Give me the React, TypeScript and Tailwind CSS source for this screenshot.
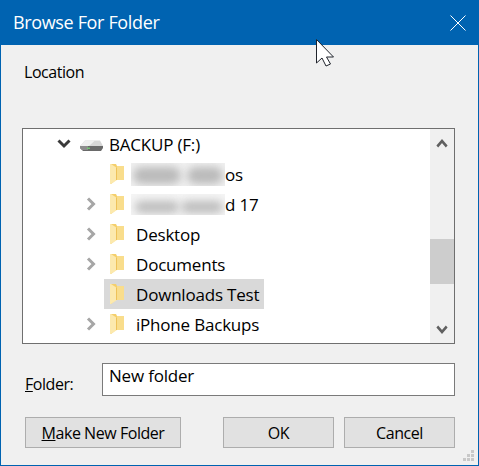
function FolderIcon() {
  return (
    <svg width="14" height="22" viewBox="0 0 14 22" className="shrink-0">
      <path d="M0 1 H6 L7 3 H14 V17 H6 L1 21 H0 Z" fill="#f4cf6c" />
      <path d="M7 3 H14 V17 H7 Z" fill="#f9dd8c" />
      <path d="M0 1 H1 L7 5 V17 L1 21 H0 Z" fill="#fce9ae" />
      <path d="M6.5 4.5 V17" stroke="#eec25a" strokeWidth="1" />
    </svg>
  );
}

function DriveIcon() {
  return (
    <svg width="23" height="12" viewBox="0 0 23 12" className="shrink-0">
      <path d="M5 0.5 H20 L23 6 H0 Z" fill="#d6d6d6" />
      <path d="M0 6 L5 0.5 H15 L9 6 Z" fill="#efefef" />
      <path d="M0 6 H23 V8 L21 11 H3 L0 8 Z" fill="#6a6a6a" />
      <path d="M0 6 H8 V10 H2 L0 8 Z" fill="#8c8c8c" />
      <path d="M7 7.5 H10 V9 H7 Z" fill="#74c474" />
    </svg>
  );
}

function ArrowRight() {
  return (
    <svg width="10" height="14" viewBox="0 0 10 14" className="shrink-0">
      <path d="M2 1.5 L7.5 7 L2 12.5" fill="none" stroke="#a6a6a6" strokeWidth="3" />
    </svg>
  );
}

function ArrowVertical({ up, color, width }: { up?: boolean; color: string; width: number }) {
  return (
    <svg width={width} height="10" viewBox="0 0 14 10" preserveAspectRatio="none" className="shrink-0">
      <path d={up ? "M1.5 8.5 L7 3 L12.5 8.5" : "M1.5 1.5 L7 7 L12.5 1.5"} fill="none" stroke={color} strokeWidth="3" />
    </svg>
  );
}

function Row({ label, arrow, selected, children }: { label: string; arrow?: boolean; selected?: boolean; children?: React.ReactNode }) {
  return (
    <div className="flex h-[30px] items-center">
      <div className="flex w-[81px] justify-end pr-[8px]">{arrow && <ArrowRight />}</div>
      <div className={`flex h-[30px] items-center pl-[6px] ${selected ? "w-[160px] bg-[#d9d9d9]" : ""}`}>
        <FolderIcon />
        {children}
        <span className={children ? "pt-[2px]" : "ml-[12px] pt-[2px]"}>{label}</span>
      </div>
    </div>
  );
}

export default function App() {
  return (
    <div className="relative flex h-[466px] w-[479px] flex-col border-x border-b border-[#0063b1] bg-[#f0f0f0] font-['Open_Sans','Noto_Sans',sans-serif] text-[16px] tracking-[-0.45px] text-black">
      {/* Title bar */}
      <div className="-mx-px flex h-[45px] shrink-0 items-center justify-between bg-[#0063b1] px-[13px] text-white">
        <span className="text-[18px] tracking-[-0.35px]">Browse For Folder</span>
        <svg width="16" height="16" viewBox="0 0 16 16">
          <path d="M0.5 0.5 L15.5 15.5 M15.5 0.5 L0.5 15.5" stroke="#fff" strokeWidth="1" />
        </svg>
      </div>

      <div className="flex flex-1 flex-col pl-[21px] pr-[23px]">
        <div className="ml-[2px] mt-[15px] h-[68px]">Location</div>

        {/* Tree */}
        <div className="flex h-[216px] border border-[#6f6f6f] bg-white text-[17px] tracking-[-0.2px]">
          <div className="flex-1">
            <div className="flex h-[30px] items-center">
              <div className="ml-[34px]">
                <ArrowVertical color="#3a3a3a" width={14} />
              </div>
              <div className="ml-[9px] mt-[4px] flex">
                <DriveIcon />
              </div>
              <span className="ml-[6px] pt-[2px]">BACKUP (F:)</span>
            </div>
            <Row label="os">
              <div className="ml-[7px] flex h-[23px] w-[94px] items-center gap-[6px] overflow-hidden bg-[#f1f1f1] pl-[2px] pt-[3px]">
                <div className="h-[17px] w-[48px] shrink-0 rounded-full bg-[#bababa] blur-[4px]" />
                <div className="h-[17px] w-[36px] shrink-0 rounded-full bg-[#bababa] blur-[4px]" />
              </div>
            </Row>
            <Row label="d 17" arrow>
              <div className="ml-[7px] flex h-[21px] w-[94px] items-center gap-[2px] overflow-hidden bg-[#f5f5f5] pl-[4px] pt-[6px]">
                <div className="h-[12px] w-[44px] shrink-0 rounded-full bg-[#bdbdbd] blur-[4px]" />
                <div className="h-[12px] w-[42px] shrink-0 rounded-full bg-[#bdbdbd] blur-[4px]" />
              </div>
            </Row>
            <Row label="Desktop" arrow />
            <Row label="Documents" arrow />
            <Row label="Downloads Test" selected />
            <Row label="iPhone Backups" arrow />
          </div>

          {/* Scrollbar */}
          <div className="flex w-[24px] flex-col items-center bg-[#f0f0f0]">
            <div className="mt-[9px] flex">
              <ArrowVertical up color="#606060" width={12} />
            </div>
            <div className="mt-[91px] h-[45px] w-full bg-[#cdcdcd]" />
            <div className="mt-[41px] flex">
              <ArrowVertical color="#606060" width={12} />
            </div>
          </div>
        </div>

        {/* Folder field */}
        <div className="mt-[19px] flex items-center">
          <span className="mt-[9px] w-[80px] pl-[3px]">
            <span className="underline">F</span>older:
          </span>
          <div className="flex h-[33px] flex-1 items-center border border-[#7a7a7a] bg-white pb-[8px] pl-[6px] text-[17px] tracking-[-0.2px]">
            New folder
          </div>
        </div>

        {/* Buttons */}
        <div className="mt-[21px] flex pl-[3px]">
          <button className="h-[31px] w-[156px] border border-[#adadad] bg-[#e1e1e1]">
            <span className="underline">M</span>ake New Folder
          </button>
          <button className="ml-[42px] h-[31px] w-[111px] border border-[#adadad] bg-[#e1e1e1]">OK</button>
          <button className="ml-[10px] h-[31px] w-[111px] border border-[#adadad] bg-[#e1e1e1]">Cancel</button>
        </div>
      </div>

      {/* Resize grip */}
      <svg width="12" height="12" viewBox="0 0 12 12" className="absolute bottom-[3px] right-[3px]">
        <path d="M8 0 H11 V3 H8 Z M4 4 H7 V7 H4 Z M8 4 H11 V7 H8 Z M0 8 H3 V11 H0 Z M4 8 H7 V11 H4 Z M8 8 H11 V11 H8 Z" fill="#c8c8c8" />
      </svg>

      {/* Mouse cursor */}
      <svg width="20" height="29" viewBox="0 0 20 29" className="absolute left-[314px] top-[39px]">
        <path d="M1.5 0.5 V24 L7 19 L11 27 L15.5 25 L11.5 18 H18.5 Z" fill="#fff" stroke="#20242c" strokeWidth="1" />
      </svg>
    </div>
  );
}
